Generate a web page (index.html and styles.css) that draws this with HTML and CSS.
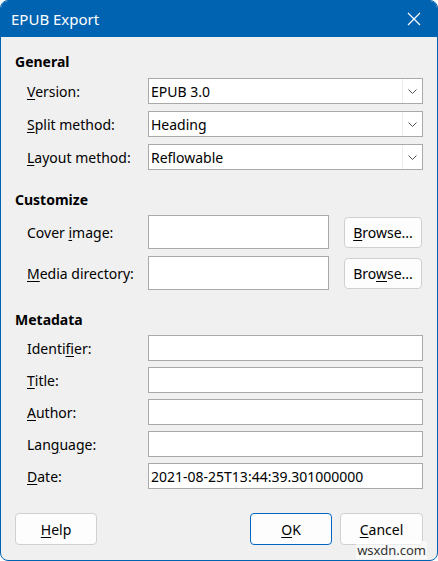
FILE: index.html
```html
<!DOCTYPE html>
<html>
<head>
<meta charset="utf-8">
<link rel="stylesheet" href="styles.css">
</head>
<body>
<div class="window">
  <div class="titlebar">
    <span class="title">EPUB Export</span>
    <svg class="close" width="14" height="14" viewBox="0 0 14 14"><path d="M1 1 L13 13 M13 1 L1 13" stroke="#fff" stroke-width="1.2" fill="none"/></svg>
  </div>
  <div class="content">
    <section class="group">
      <h2 class="heading">General</h2>
      <div class="rows">
        <label class="label"><u>V</u>ersion:</label>
        <div class="select"><span class="value">EPUB 3.0</span><span class="arrow"><svg width="9" height="5" viewBox="0 0 9 5"><path d="M0.5 0.5 L4.5 4.5 L8.5 0.5" stroke="#555" fill="none"/></svg></span></div>
        <label class="label"><u>S</u>plit method:</label>
        <div class="select"><span class="value">Heading</span><span class="arrow"><svg width="9" height="5" viewBox="0 0 9 5"><path d="M0.5 0.5 L4.5 4.5 L8.5 0.5" stroke="#555" fill="none"/></svg></span></div>
        <label class="label"><u>L</u>ayout method:</label>
        <div class="select"><span class="value">Reflowable</span><span class="arrow"><svg width="9" height="5" viewBox="0 0 9 5"><path d="M0.5 0.5 L4.5 4.5 L8.5 0.5" stroke="#555" fill="none"/></svg></span></div>
      </div>
    </section>
    <section class="group">
      <h2 class="heading">Customize</h2>
      <div class="rows browse-rows">
        <label class="label">Cover <u>i</u>mage:</label>
        <div class="input tall"></div>
        <button class="btn browse"><u>B</u>rowse...</button>
        <label class="label"><u>M</u>edia directory:</label>
        <div class="input tall"></div>
        <button class="btn browse">Bro<u>w</u>se...</button>
      </div>
    </section>
    <section class="group">
      <h2 class="heading">Metadata</h2>
      <div class="rows meta">
        <label class="label">Identi<u>f</u>ier:</label>
        <div class="input"></div>
        <label class="label"><u>T</u>itle:</label>
        <div class="input"></div>
        <label class="label"><u>A</u>uthor:</label>
        <div class="input"></div>
        <label class="label">Lan<u>g</u>uage:</label>
        <div class="input"></div>
        <label class="label"><u>D</u>ate:</label>
        <div class="input"><span class="value">2021-08-25T13:44:39.301000000</span></div>
      </div>
    </section>
    <div class="footer">
      <button class="btn help"><u>H</u>elp</button>
      <div class="spacer"></div>
      <button class="btn ok"><u>O</u>K</button>
      <button class="btn cancel"><u>C</u>ancel</button>
    </div>
  </div>
  <div class="watermark">wsxdn.com</div>
</div>
</body>
</html>
```
FILE: styles.css
```css
* { box-sizing: border-box; }
html, body { margin: 0; padding: 0; background: #ffffff; }
body {
  font-family: "Noto Sans", "Open Sans", sans-serif;
  font-size: 14px;
  color: #000;
}
.window {
  position: relative;
  width: 438px;
  height: 561px;
  border: 1px solid #0063b1;
  border-radius: 8px;
  overflow: hidden;
  background: #f0f0f0;
  display: flex;
  flex-direction: column;
}
.titlebar {
  height: 36px;
  background: #0063b1;
  color: #fff;
  display: flex;
  align-items: center;
  justify-content: space-between;
  padding: 0 16px 0 10px;
  flex: none;
}
.title { font-size: 15px; }
.close { display: block; }
.content {
  flex: 1;
  display: flex;
  flex-direction: column;
  padding: 15px 14px 0 14px;
}
.heading {
  margin: 0;
  font-size: 14px;
  font-weight: bold;
  line-height: 20px;
}
.group + .group { margin-top: 20px; }
.rows {
  display: grid;
  grid-template-columns: 133px 1fr;
  row-gap: 7px;
  margin-top: 6px;
  align-items: center;
}
.rows.meta { row-gap: 6px; margin-top: 5px; }
.browse-rows {
  grid-template-columns: 133px 1fr 94px;
  margin-top: 5px;
}
.label {
  padding-left: 12px;
  white-space: nowrap;
}
u { text-decoration: underline; text-underline-offset: 2px; }
.select {
  height: 26px;
  background: #fff;
  border: 1px solid #a9a9a9;
  display: flex;
  align-items: center;
}
.select .value { flex: 1; padding-left: 2px; }
.arrow {
  width: 20px;
  height: 24px;
  border-left: 1px solid #ececec;
  display: flex;
  align-items: center;
  justify-content: center;
}
.input {
  height: 26px;
  background: #fff;
  border: 1px solid #a9a9a9;
  display: flex;
  align-items: center;
  padding-left: 2px;
}
.input.tall { height: 34px; }
.btn {
  font-family: inherit;
  font-size: 14px;
  color: #000;
  background: #fdfdfd;
  border: 1px solid #d0d0d0;
  border-radius: 4px;
  padding: 0;
}
.browse {
  height: 31px;
  margin-left: 15px;
  width: 78px;
}
.footer {
  display: flex;
  margin-top: 24px;
  gap: 8px;
}
.footer .btn { height: 32px; width: 82px; }
.spacer { flex: 1; }
.ok { border-color: #0067c0 !important; }
.cancel { width: 83px !important; }
.watermark {
  position: absolute;
  right: 10px;
  bottom: 1px;
  font-size: 13px;
  color: #333;
  background: rgba(255,255,255,0.6);
  padding: 0 1px;
}
```
